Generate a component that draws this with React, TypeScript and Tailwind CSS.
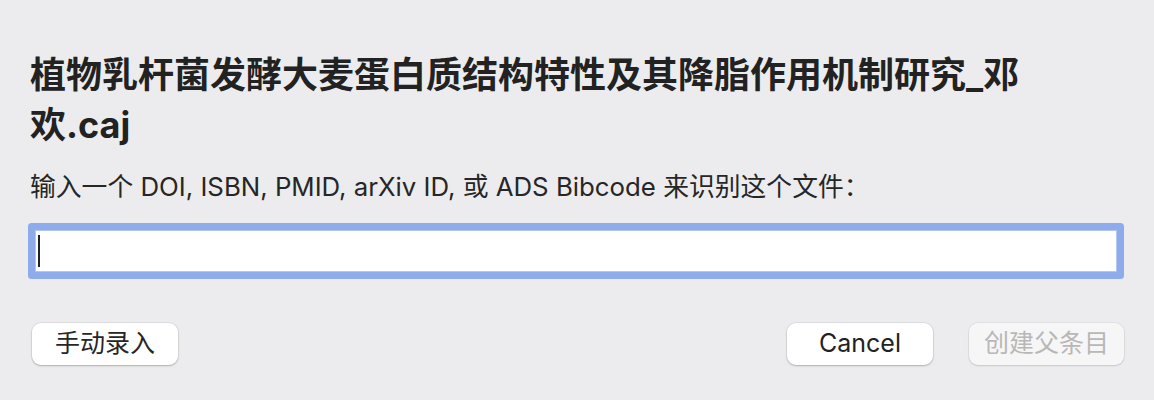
export default function App() {
  const font = { fontFamily: 'Inter, "Noto Sans CJK SC", sans-serif' };

  return (
    <div
      className="h-[400px] w-full bg-[#ececee] px-[30px] pt-[50px] text-[#242424] antialiased"
      style={font}
    >
      <h1 className="w-[1010px] text-[36px] font-bold leading-[50px] text-[#222222]">
        植物乳杆菌发酵大麦蛋白质结构特性及其降脂作用机制研究_邓欢.caj
      </h1>

      <p className="mt-[22px] text-[25.8px] leading-[30px] text-[#262626]">
        输入一个 DOI, ISBN, PMID, arXiv ID, 或 ADS Bibcode 来识别这个文件：
      </p>

      {/* fake focused text field with caret */}
      <div className="ml-[5px] mr-[7px] mt-[28px] flex h-[42px] items-center rounded-[1px] border border-[#b1c6f2] bg-white pl-[2px] shadow-[0_0_0_7px_#8eabec]">
        <span className="block h-[32px] w-[2px] bg-[#222222]" />
      </div>

      <div className="mt-[51px] flex items-center">
        <button className="ml-[2px] h-[42px] min-w-[146px] rounded-[9px] bg-white px-[15px] text-[25px] text-[#262626] shadow-[0_0_0_1px_rgba(0,0,0,0.05),0_1px_2px_rgba(0,0,0,0.22)]">
          手动录入
        </button>
        <div className="ml-auto flex items-center gap-[36px]">
          <button className="h-[42px] min-w-[146px] rounded-[9px] bg-white px-[15px] text-[25px] text-[#222222] shadow-[0_0_0_1px_rgba(0,0,0,0.05),0_1px_2px_rgba(0,0,0,0.22)]">
            Cancel
          </button>
          <button
            disabled
            className="h-[42px] min-w-[146px] rounded-[9px] bg-[#f6f6f6] px-[15px] text-[25px] text-[#b8b8b8] shadow-[0_0_0_1px_rgba(0,0,0,0.04),0_1px_2px_rgba(0,0,0,0.12)]"
          >
            创建父条目
          </button>
        </div>
      </div>
    </div>
  );
}
